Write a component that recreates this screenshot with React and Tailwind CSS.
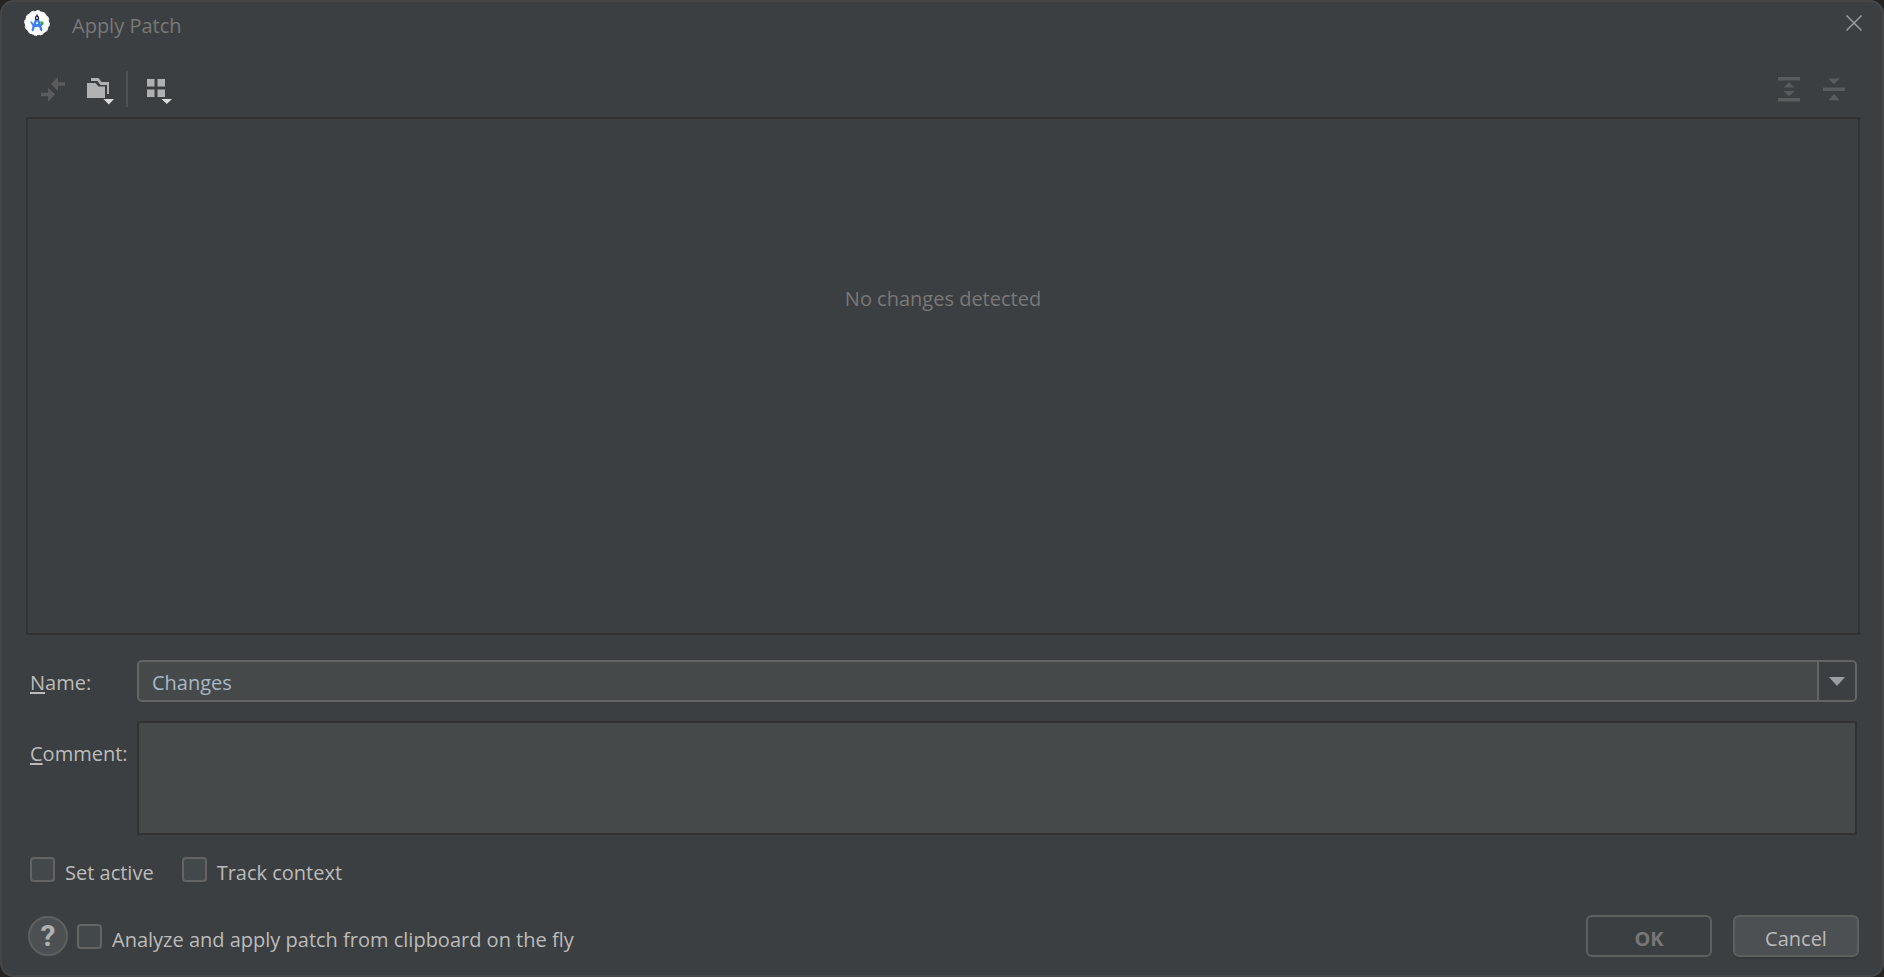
import React from 'react';
import clsx from 'clsx';

const StudioLogo = () => (
  <svg width="26" height="26" viewBox="0 0 26 26" aria-hidden="true">
    <circle cx="13" cy="13" r="12.2" fill="#fff" />
    <circle cx="13" cy="13" r="12.4" fill="none" stroke="#fff" strokeWidth="1" strokeDasharray="3.4 3" />
    <path d="M16 11.500a3 3 0 0 1 3.800 1.500l-.8 2h-2z" fill="#34a853" />
    <path d="M6 11.500h2L9.500 14h7l2 1.500-2 1.500H9z" fill="#4285f4" />
    <path d="M11.700 7h2.600l4.200 12.800-.8 1.700-1.500-1.200L13 10.800 9.800 20.300l-1.500 1.200-.8-1.700z" fill="#3b7df0" />
    <path d="M12.200 4.500h1.600v2h-1.600z" fill="#1f2a44" />
    <circle cx="13" cy="8" r="1.600" fill="#dbe7ff" stroke="#1f2a44" strokeWidth="1.300" />
  </svg>
);

const MoveIcon = () => (
  <svg width="26" height="26" viewBox="0 0 26 26" fill="#5a5b5c" aria-hidden="true">
    <path d="M11 8l7-7v5.200h7v3.600h-7V15z" />
    <path d="M15 18.500l-7 7v-5.200H1v-3.600h7v-5.200z" />
  </svg>
);

const FolderIcon = () => (
  <svg width="28" height="28" viewBox="0 0 28 28" aria-hidden="true">
    <path d="M5 1h7.500l3 4H23v12h-2V8h-6.500l-3-4H5z" fill="#afb1b3" />
    <path d="M1 6h8.500l3 3.500H19V21H1z" fill="#afb1b3" />
    <path d="M17.500 22H28l-5.200 5.500z" fill="#dcdcdc" />
  </svg>
);

const GroupIcon = () => (
  <svg width="26" height="26" viewBox="0 0 26 26" aria-hidden="true">
    <path d="M1 1h7.500v7.500H1zM11.500 1H19v7.500h-7.500zM1 11.500h7.500V19H1zM11.500 11.500H19V19h-7.500z" fill="#afb1b3" />
    <path d="M15.500 21H26l-5.200 5z" fill="#dcdcdc" />
  </svg>
);

const ExpandIcon = () => (
  <svg width="22" height="26" viewBox="0 0 22 26" fill="#5a5b5c" aria-hidden="true">
    <path d="M0 1h22v3.500H0zM0 22h22v3.500H0zM11 6l5.500 5.500h-11zM11 20.500l5.500-5.500h-11z" />
  </svg>
);

const CollapseIcon = () => (
  <svg width="22" height="26" viewBox="0 0 22 26" fill="#5a5b5c" aria-hidden="true">
    <path d="M0 11.500h22V15H0zM11 8.500L16.800 2.500H5.200zM11 18l5.800 6.200H5.200z" />
  </svg>
);

const CheckBox = ({ label }) => (
  <label className="flex items-center gap-[10px]">
    <input
      type="checkbox"
      className="size-[25px] shrink-0 appearance-none rounded-[4px] border-2 border-[#646464] bg-[#43494a] checked:bg-[#4b6eaf]"
    />
    <span className="pt-2">{label}</span>
  </label>
);

const DialogButton = ({ children, className, ...props }) => (
  <button
    type="button"
    className={clsx('h-[42px] w-[126px] rounded-md border-2 border-[#5e6060] pt-[6px]', className)}
    {...props}
  >
    {children}
  </button>
);

const App = () => {
  return (
    <div className="flex min-h-screen bg-[#242424] font-['Open_Sans','Noto_Sans_CJK_KR',sans-serif] text-[20px] leading-7 text-[#bbbbbb]">
      <div className="flex flex-1 flex-col rounded-[14px] border-2 border-[#464646] bg-[#3c3f41]">
        {/* Title bar */}
        <header className="flex h-[42px] items-center pl-[22px] pr-[18px]">
          <StudioLogo />
          <h1 className="flex-1 pl-[22px] pt-[6px] text-[#787878]">Apply Patch</h1>
          <button type="button" aria-label="Close" className="flex size-5 items-center justify-center">
            <svg width="16" height="16" viewBox="0 0 16 16" stroke="#9b9c9d" strokeWidth="1.500">
              <path d="M.5.5l15 15M15.500.5l-15 15" />
            </svg>
          </button>
        </header>

        <main className="flex flex-1 flex-col pb-[18px] pl-6 pr-[22px]">
          {/* Toolbar */}
          <div className="flex h-[73px] items-center pl-[14px] pr-[15px] pt-[17px]">
            <button type="button" aria-label="Move to changelist" disabled><MoveIcon /></button>
            <button type="button" aria-label="Map base directory" className="ml-5 pt-1"><FolderIcon /></button>
            <div className="ml-3 h-9 w-0.5 bg-[#515151]" />
            <button type="button" aria-label="Group by" className="ml-[18px] pt-1"><GroupIcon /></button>
            <div className="flex-1" />
            <button type="button" aria-label="Expand all" disabled><ExpandIcon /></button>
            <button type="button" aria-label="Collapse all" className="ml-[23px]" disabled><CollapseIcon /></button>
          </div>

          <section className="flex flex-1 flex-col items-center border-2 border-[#323232]">
            <p className="pt-[166px] text-[#787878]">No changes detected</p>
          </section>

          <div className="grid grid-cols-[107px_1fr] gap-y-[19px] pl-1 pr-[3px] pt-[25px]">
            <label htmlFor="name" className="pt-[9px]"><u className="underline-offset-2">N</u>ame:</label>
            <div className="flex h-[42px] rounded-[5px] border-2 border-[#646464] bg-[#45494a]">
              <input
                id="name"
                type="text"
                defaultValue="Changes"
                className="min-w-0 flex-1 bg-transparent pl-[13px] pt-1 text-[#a9b7c6] outline-none"
              />
              <button
                type="button"
                aria-label="Show names"
                className="flex w-[38px] items-center justify-center rounded-r-[3px] border-l-2 border-[#646464] bg-[#3c3f41]"
              >
                <svg width="16" height="9" viewBox="0 0 16 9" fill="#9a9da2"><path d="M0 0h16L8 9z" /></svg>
              </button>
            </div>
            <label htmlFor="comment" className="pt-[19px]"><u className="underline-offset-2">C</u>omment:</label>
            <textarea
              id="comment"
              className="h-[114px] resize-none border-2 border-[#323232] bg-[#45494a] p-1 text-[#a9b7c6] outline-none"
            />
          </div>

          <div className="flex gap-7 pl-1 pt-4">
            <CheckBox label="Set active" />
            <CheckBox label="Track context" />
          </div>

          <footer className="flex items-center pl-0.5 pr-px pt-7">
            <button
              type="button"
              aria-label="Help"
              className="mr-[9px] flex size-10 items-center justify-center rounded-full border-2 border-[#5e6060] bg-[#4c5052] font-['Roboto',sans-serif] text-[30px] font-bold text-[#afb1b3]"
            >
              ?
            </button>
            <CheckBox label="Analyze and apply patch from clipboard on the fly" />
            <div className="flex-1" />
            <DialogButton className="font-bold text-[#777777]" disabled>OK</DialogButton>
            <DialogButton className="ml-[21px] bg-[#4c5052] shadow-[0_2px_0_#36393a]">Cancel</DialogButton>
          </footer>
        </main>
      </div>
    </div>
  );
};

export default App;
